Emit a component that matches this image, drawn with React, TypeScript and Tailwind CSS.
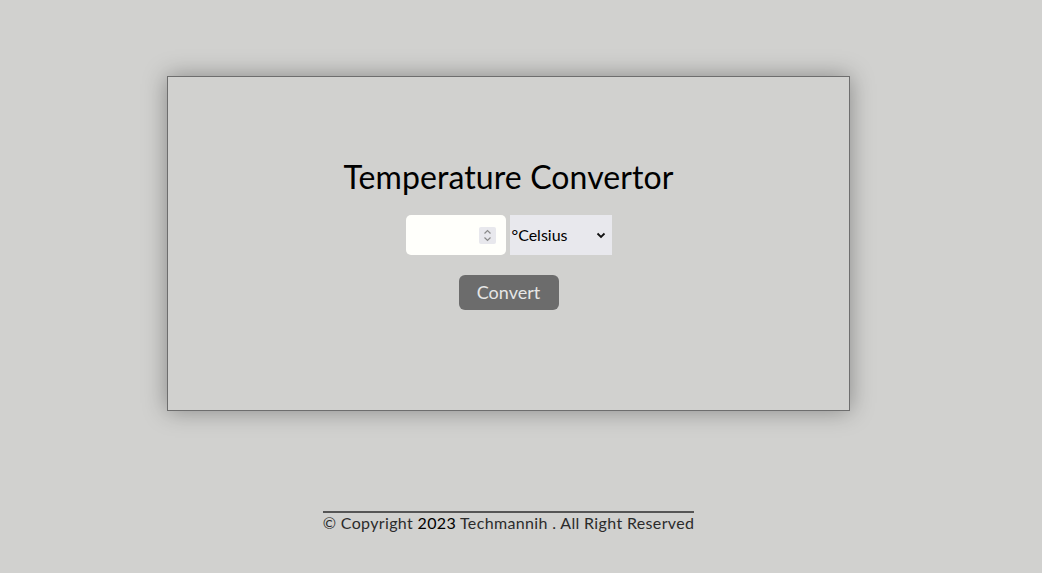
import React from 'react';

const App: React.FC = () => (
    <div className="min-h-[573px] w-full bg-[#d1d1cf] font-['Lato','Noto_Sans',sans-serif]">
        <div className="w-[1017px] flex flex-col items-center">
            {/* Card */}
            <div className="mt-[76px] w-[683px] h-[335px] border border-[#6e6e6e] shadow-[0_0_22px_rgba(0,0,0,0.35)] flex flex-col items-center pt-[80px]">
                <h1 className="text-[32px] leading-[40px] text-black tracking-[0.1px]">Temperature Convertor</h1>
                <div className="mt-[18px] flex gap-1">
                    <div className="w-[100px] h-[40px] rounded-[5px] bg-[#fffffb] flex items-center justify-end pr-[10px]">
                        <div className="w-[17px] h-[17px] bg-[#e8e8ed] rounded-[2px] flex items-center justify-center">
                            <svg width="9" height="13" viewBox="0 0 9 13" fill="none" stroke="#8a8a8a" strokeWidth="1.2">
                                <path d="M1.5 4.5 L4.5 1.5 L7.5 4.5" />
                                <path d="M1.5 8.5 L4.5 11.5 L7.5 8.5" />
                            </svg>
                        </div>
                    </div>
                    <div className="w-[102px] h-[40px] bg-[#e8e8ed] flex items-center justify-between pl-[2px] pr-[6px]">
                        <span className="text-[16px] text-black">°Celsius</span>
                        <svg width="10" height="7" viewBox="0 0 10 7" fill="none" stroke="#111" strokeWidth="1.8">
                            <path d="M1.5 1.5 L5 5 L8.5 1.5" />
                        </svg>
                    </div>
                </div>
                <button className="mt-[20px] w-[100px] h-[35px] rounded-[6px] bg-[#6c6c6c] text-[#e6e6e6] text-[18px]">
                    Convert
                </button>
            </div>

            {/* Footer */}
            <div className="mt-[100px] border-t-2 border-[#555] text-[16px] tracking-[0.35px] text-[#2b2b2b] leading-[20px]">
                © Copyright <span className="text-black">2023</span> Techmannih . All Right Reserved
            </div>
        </div>
    </div>
);

export default App;
